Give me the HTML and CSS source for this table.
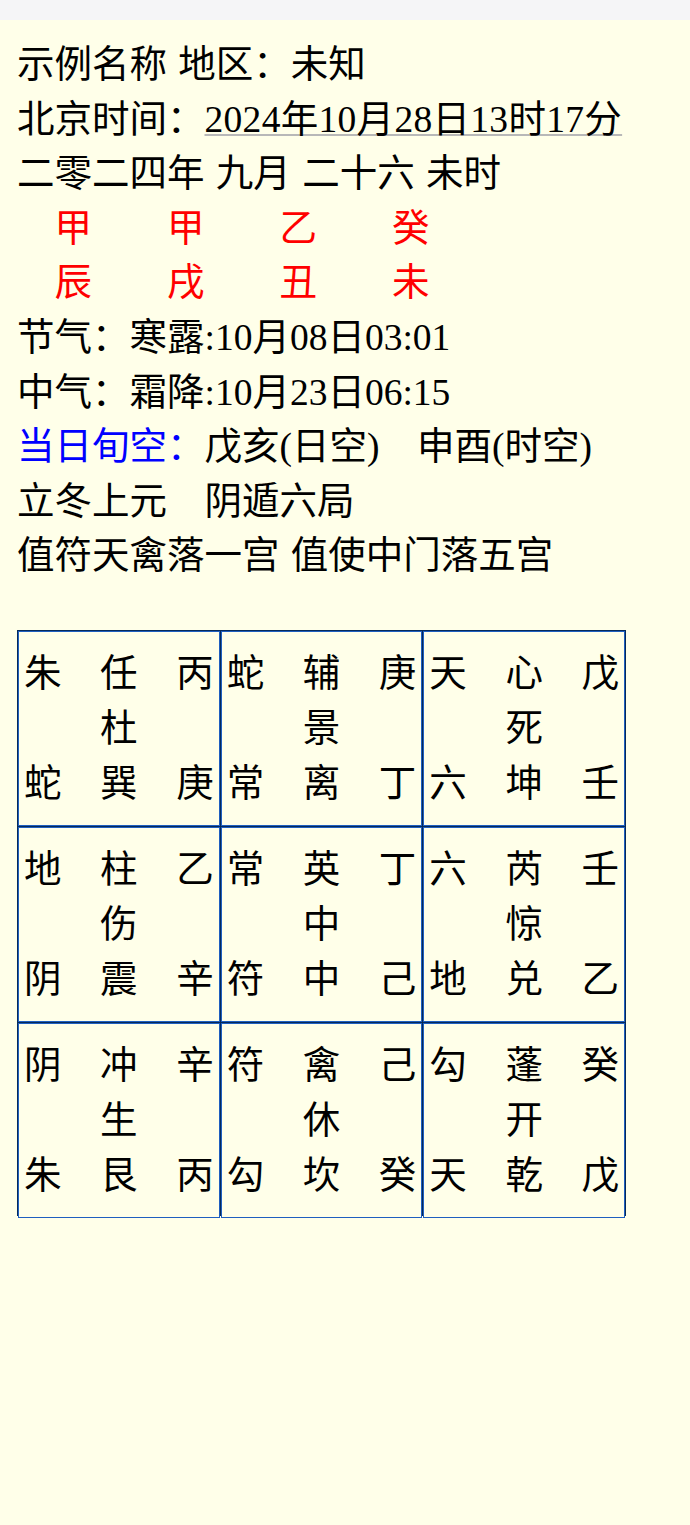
FILE: index.html
```html
<!DOCTYPE html>
<html lang="zh">
<head>
<meta charset="utf-8">
<title>奇门</title>
<link rel="stylesheet" href="styles.css">
</head>
<body>
<div class="topbar"></div>
<main class="page">
  <div class="line">示例名称 地区：未知</div>
  <div class="line">北京时间：<span class="date">2024年10月28日13时17分</span></div>
  <div class="line">二零二四年 九月 二十六 未时</div>
  <div class="line pillars"><span>甲</span><span>甲</span><span>乙</span><span>癸</span></div>
  <div class="line pillars"><span>辰</span><span>戌</span><span>丑</span><span>未</span></div>
  <div class="line">节气：寒露:10月08日03:01</div>
  <div class="line">中气：霜降:10月23日06:15</div>
  <div class="line"><span class="label">当日旬空：</span>戊亥(日空)<span class="wide-gap"></span>申酉(时空)</div>
  <div class="line">立冬上元<span class="wide-gap"></span>阴遁六局</div>
  <div class="line">值符天禽落一宫 值使中门落五宫</div>

  <div class="board">
    <div class="cell"><span>朱</span><span>任</span><span>丙</span><span></span><span>杜</span><span></span><span>蛇</span><span>巽</span><span>庚</span></div>
    <div class="cell"><span>蛇</span><span>辅</span><span>庚</span><span></span><span>景</span><span></span><span>常</span><span>离</span><span>丁</span></div>
    <div class="cell"><span>天</span><span>心</span><span>戊</span><span></span><span>死</span><span></span><span>六</span><span>坤</span><span>壬</span></div>
    <div class="cell"><span>地</span><span>柱</span><span>乙</span><span></span><span>伤</span><span></span><span>阴</span><span>震</span><span>辛</span></div>
    <div class="cell"><span>常</span><span>英</span><span>丁</span><span></span><span>中</span><span></span><span>符</span><span>中</span><span>己</span></div>
    <div class="cell"><span>六</span><span>芮</span><span>壬</span><span></span><span>惊</span><span></span><span>地</span><span>兑</span><span>乙</span></div>
    <div class="cell"><span>阴</span><span>冲</span><span>辛</span><span></span><span>生</span><span></span><span>朱</span><span>艮</span><span>丙</span></div>
    <div class="cell"><span>符</span><span>禽</span><span>己</span><span></span><span>休</span><span></span><span>勾</span><span>坎</span><span>癸</span></div>
    <div class="cell"><span>勾</span><span>蓬</span><span>癸</span><span></span><span>开</span><span></span><span>天</span><span>乾</span><span>戊</span></div>
  </div>
</main>
</body>
</html>
```

FILE: styles.css
```css
html, body {
  margin: 0;
  padding: 0;
  background: #ffffe9;
}

body {
  min-height: 1525px;
  font-family: "Liberation Serif", "Noto Sans CJK SC", serif;
  font-size: 37.5px;
  color: #000;
}

.topbar {
  height: 20px;
  background: #f5f5f7;
}

.page {
  padding: 18px 17px 0 17px;
}

.line {
  line-height: 54.6px;
  height: 54.6px;
  white-space: nowrap;
  word-spacing: 2px;
}

.date {
  letter-spacing: 0.3px;
  text-decoration: underline;
  text-decoration-color: #b8b8b8;
  text-decoration-thickness: 2px;
  text-underline-offset: 2px;
}

.pillars {
  display: flex;
  gap: 75px;
  padding-left: 37.5px;
  color: #ff0000;
}

.pillars span {
  width: 37.5px;
}

.label {
  color: #0000ff;
}

.wide-gap {
  display: inline-block;
  width: 37.5px;
}

.board {
  margin-top: 46px;
  width: 609px;
  height: 586px;
  box-sizing: border-box;
  display: grid;
  grid-template-columns: repeat(3, 1fr);
  grid-template-rows: repeat(3, 1fr);
  gap: 1px;
  border: 1px solid #062a5a;
  background: #062a5a;
}

.cell {
  background: #ffffe9;
  box-shadow: inset 0 0 0 1px #1f5fc0;
  padding: 15px 6px;
  display: grid;
  grid-template-columns: 1fr auto 1fr;
  grid-template-rows: repeat(3, 55px);
  line-height: 55px;
  align-content: center;
}

.cell span:nth-child(3n+1) {
  text-align: left;
}

.cell span:nth-child(3n+2) {
  text-align: center;
}

.cell span:nth-child(3n) {
  text-align: right;
}
```
